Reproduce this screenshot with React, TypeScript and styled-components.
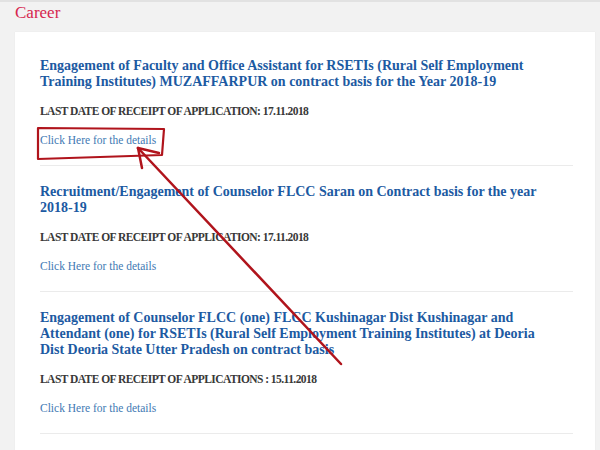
import * as React from 'react';
import styled, { createGlobalStyle } from 'styled-components';

const GlobalStyle = createGlobalStyle`
  html, body {
    margin: 0;
    padding: 0;
    background: #f2f2f2;
  }
`;

const Page = styled.div`
  position: relative;
  width: 600px;
  height: 450px;
  overflow: hidden;
  background: #f2f2f2;
  border-top: 2px solid #e2e2e2;
  box-sizing: border-box;
  font-family: "Liberation Serif", "Times New Roman", serif;
`;

const Heading = styled.h2`
  margin: 0;
  padding: 1px 0 0 15px;
  font-size: 17px;
  line-height: 20px;
  font-weight: normal;
  color: #d6264f;
`;

const Card = styled.div`
  margin: 9px 5px 0 15px;
  padding: 8px 22px 0 25px;
  background: #fff;
  box-shadow: 0 0 1px rgba(0, 0, 0, 0.08);
`;

const Item = styled.div`
  padding: 18px 0 17px;
  border-bottom: 1px solid #ebebeb;
`;

const Title = styled.h3`
  margin: 0;
  font-size: 14px;
  line-height: 16px;
  font-weight: bold;
  color: #1c5aa2;
`;

const TitleLine = styled.span`
  display: block;
  white-space: nowrap;
`;

const Deadline = styled.p`
  margin: 13px 0 0;
  font-size: 11.5px;
  line-height: 16px;
  font-weight: bold;
  color: #383838;
  letter-spacing: -0.55px;
`;

const DetailsLink = styled.a`
  display: block;
  margin-top: 13px;
  font-size: 11.5px;
  line-height: 16px;
  color: #4179b3;
  text-decoration: none;
`;

const Overlay = styled.svg`
  position: absolute;
  left: 0;
  top: 0;
  pointer-events: none;
`;

type Post = { title: string[]; deadline: string };

const posts: Post[] = [
  {
    title: [
      'Engagement of Faculty and Office Assistant for RSETIs (Rural Self Employment',
      'Training Institutes) MUZAFFARPUR on contract basis for the Year 2018-19',
    ],
    deadline: 'LAST DATE OF RECEIPT OF APPLICATION: 17.11.2018',
  },
  {
    title: [
      'Recruitment/Engagement of Counselor FLCC Saran on Contract basis for the year',
      '2018-19',
    ],
    deadline: 'LAST DATE OF RECEIPT OF APPLICATION: 17.11.2018',
  },
  {
    title: [
      'Engagement of Counselor FLCC (one) FLCC Kushinagar Dist Kushinagar and',
      'Attendant (one) for RSETIs (Rural Self Employment Training Institutes) at Deoria',
      'Dist Deoria State Utter Pradesh on contract basis',
    ],
    deadline: 'LAST DATE OF RECEIPT OF APPLICATIONS : 15.11.2018',
  },
];

export default function App() {
  return (
    <Page>
      <GlobalStyle />
      <Heading>Career</Heading>
      <Card>
        {posts.map((p) => (
          <Item key={p.title[0]}>
            <Title>
              {p.title.map((line) => (
                <TitleLine key={line}>{line}</TitleLine>
              ))}
            </Title>
            <Deadline>{p.deadline}</Deadline>
            <DetailsLink href="#">Click Here for the details</DetailsLink>
          </Item>
        ))}
        <Item />
      </Card>
      <Overlay width="600" height="450" viewBox="0 0 600 450">
        <g fill="none" stroke="#b0141c" strokeWidth="2.2" strokeLinecap="round" strokeLinejoin="round">
          <path d="M38 126 L164 127 L162 153 L38 157 Z" />
          <path d="M341 362 L138 146" strokeWidth="2.5" />
          <path d="M138 146 L159 151" strokeWidth="2.5" />
          <path d="M138 146 L142 166" strokeWidth="2.5" />
        </g>
      </Overlay>
    </Page>
  );
}
